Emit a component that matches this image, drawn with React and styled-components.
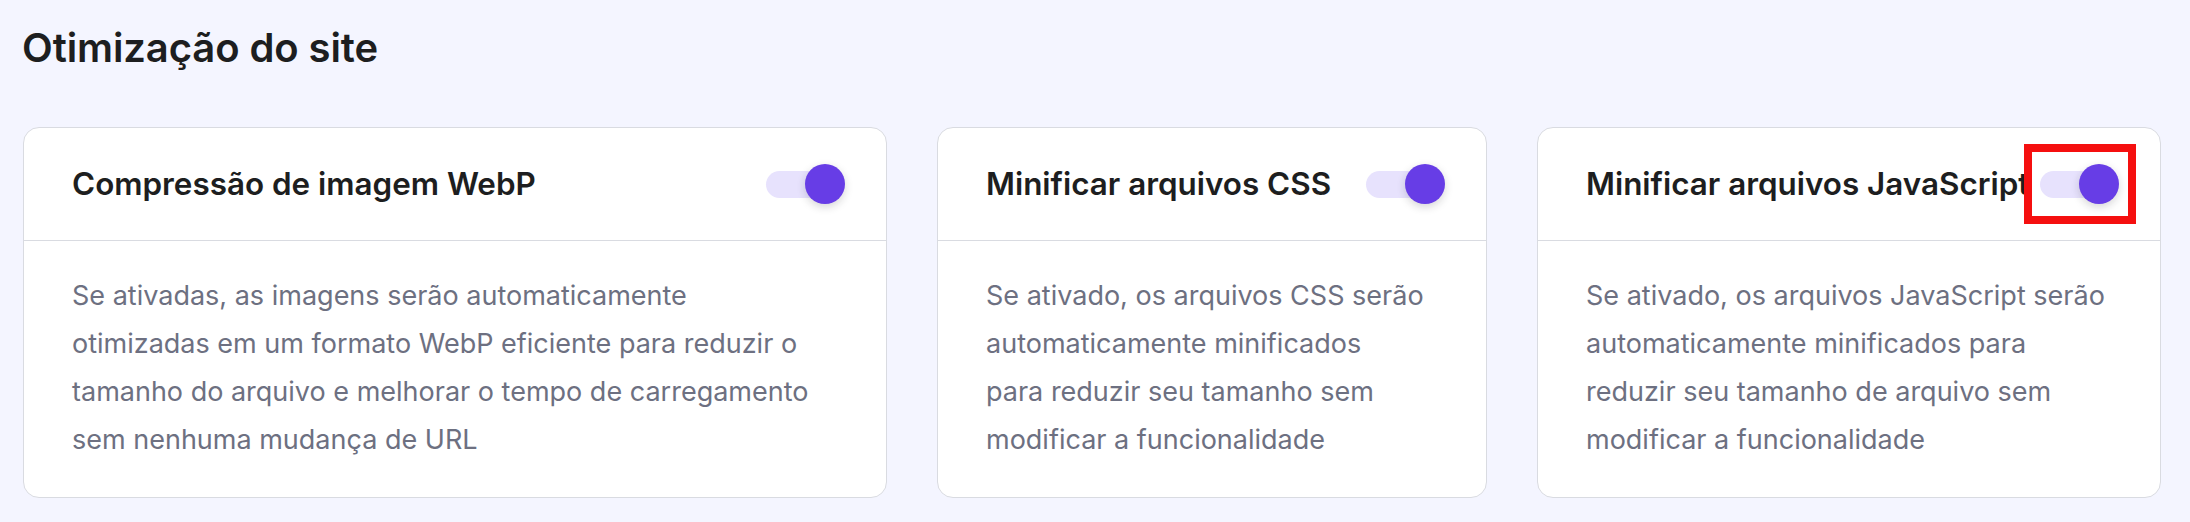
import React from 'react';
import styled, { createGlobalStyle } from 'styled-components';

const GlobalStyle = createGlobalStyle`
  body {
    margin: 0;
    background: #f4f5ff;
    font-family: Inter, "Noto Sans", sans-serif;
    -webkit-font-smoothing: antialiased;
  }
`;

const Page = styled.div`
  min-height: 522px;
  padding: 24px 29px 0 23px;
  box-sizing: border-box;
  background: #f4f5ff;
`;

const Heading = styled.h2`
  margin: 0 0 55px -1px;
  font-size: 40px;
  line-height: 48px;
  font-weight: 600;
  color: #1d1e20;
  letter-spacing: -0.1px;
`;

const CardGrid = styled.div`
  display: grid;
  grid-template-columns: minmax(0, 864fr) minmax(0, 550fr) minmax(0, 624fr);
  gap: 50px;
`;

const Card = styled.section`
  display: flex;
  flex-direction: column;
  min-width: 0;
  background: #fff;
  border: 1px solid #d9dbe1;
  border-radius: 16px;
`;

const CardHeader = styled.div`
  display: flex;
  align-items: center;
  gap: 24px;
  height: 112px;
  padding: 0 48px;
  border-bottom: 1px solid #d9dbe1;
`;

const CardTitle = styled.h3`
  flex: 1;
  min-width: 0;
  margin: 0;
  font-size: 31.4px;
  line-height: 40px;
  font-weight: 600;
  color: #1d1e20;
  white-space: nowrap;
`;

const CardBody = styled.p`
  margin: 0;
  padding: 31px 48px 33px;
  font-size: 27px;
  line-height: 48px;
  font-weight: 400;
  color: #6d7081;
  white-space: nowrap;
`;

const ToggleWrap = styled.div`
  position: relative;
  flex: none;
`;

const Track = styled.button`
  position: relative;
  display: block;
  width: 72px;
  height: 27px;
  padding: 0;
  border: none;
  border-radius: 14px;
  background: ${p => (p.$on ? '#e7e2fd' : '#dadce0')};
  cursor: pointer;
`;

const Knob = styled.span`
  position: absolute;
  top: 50%;
  left: ${p => (p.$on ? '38.5px' : '-6.5px')};
  width: 40px;
  height: 40px;
  margin-top: -20px;
  border-radius: 50%;
  background: ${p => (p.$on ? '#673de6' : '#fff')};
  box-shadow: 0 3px 8px rgba(29, 30, 32, 0.18);
`;

const Highlight = styled.span`
  position: absolute;
  top: -27px;
  left: -16px;
  width: 112px;
  height: 80px;
  box-sizing: border-box;
  border: 8px solid #f50f0f;
  pointer-events: none;
`;

const Toggle = ({ on, highlighted }) => (
  <ToggleWrap>
    <Track $on={on} aria-pressed={on}>
      <Knob $on={on} />
    </Track>
    {highlighted && <Highlight />}
  </ToggleWrap>
);

const settings = [
  {
    title: 'Compressão de imagem WebP',
    lines: [
      'Se ativadas, as imagens serão automaticamente',
      'otimizadas em um formato WebP eficiente para reduzir o',
      'tamanho do arquivo e melhorar o tempo de carregamento',
      'sem nenhuma mudança de URL',
    ],
  },
  {
    title: 'Minificar arquivos CSS',
    lines: [
      'Se ativado, os arquivos CSS serão',
      'automaticamente minificados',
      'para reduzir seu tamanho sem',
      'modificar a funcionalidade',
    ],
  },
  {
    title: 'Minificar arquivos JavaScript',
    lines: [
      'Se ativado, os arquivos JavaScript serão',
      'automaticamente minificados para',
      'reduzir seu tamanho de arquivo sem',
      'modificar a funcionalidade',
    ],
    highlighted: true,
  },
];

const App = () => (
  <>
    <GlobalStyle />
    <Page>
      <Heading>Otimização do site</Heading>
      <CardGrid>
        {settings.map(s => (
          <Card key={s.title}>
            <CardHeader>
              <CardTitle>{s.title}</CardTitle>
              <Toggle on highlighted={s.highlighted} />
            </CardHeader>
            <CardBody>
              {s.lines.map((line, i) => (
                <React.Fragment key={i}>
                  {i > 0 && <br />}
                  {line}
                </React.Fragment>
              ))}
            </CardBody>
          </Card>
        ))}
      </CardGrid>
    </Page>
  </>
);

export default App;
